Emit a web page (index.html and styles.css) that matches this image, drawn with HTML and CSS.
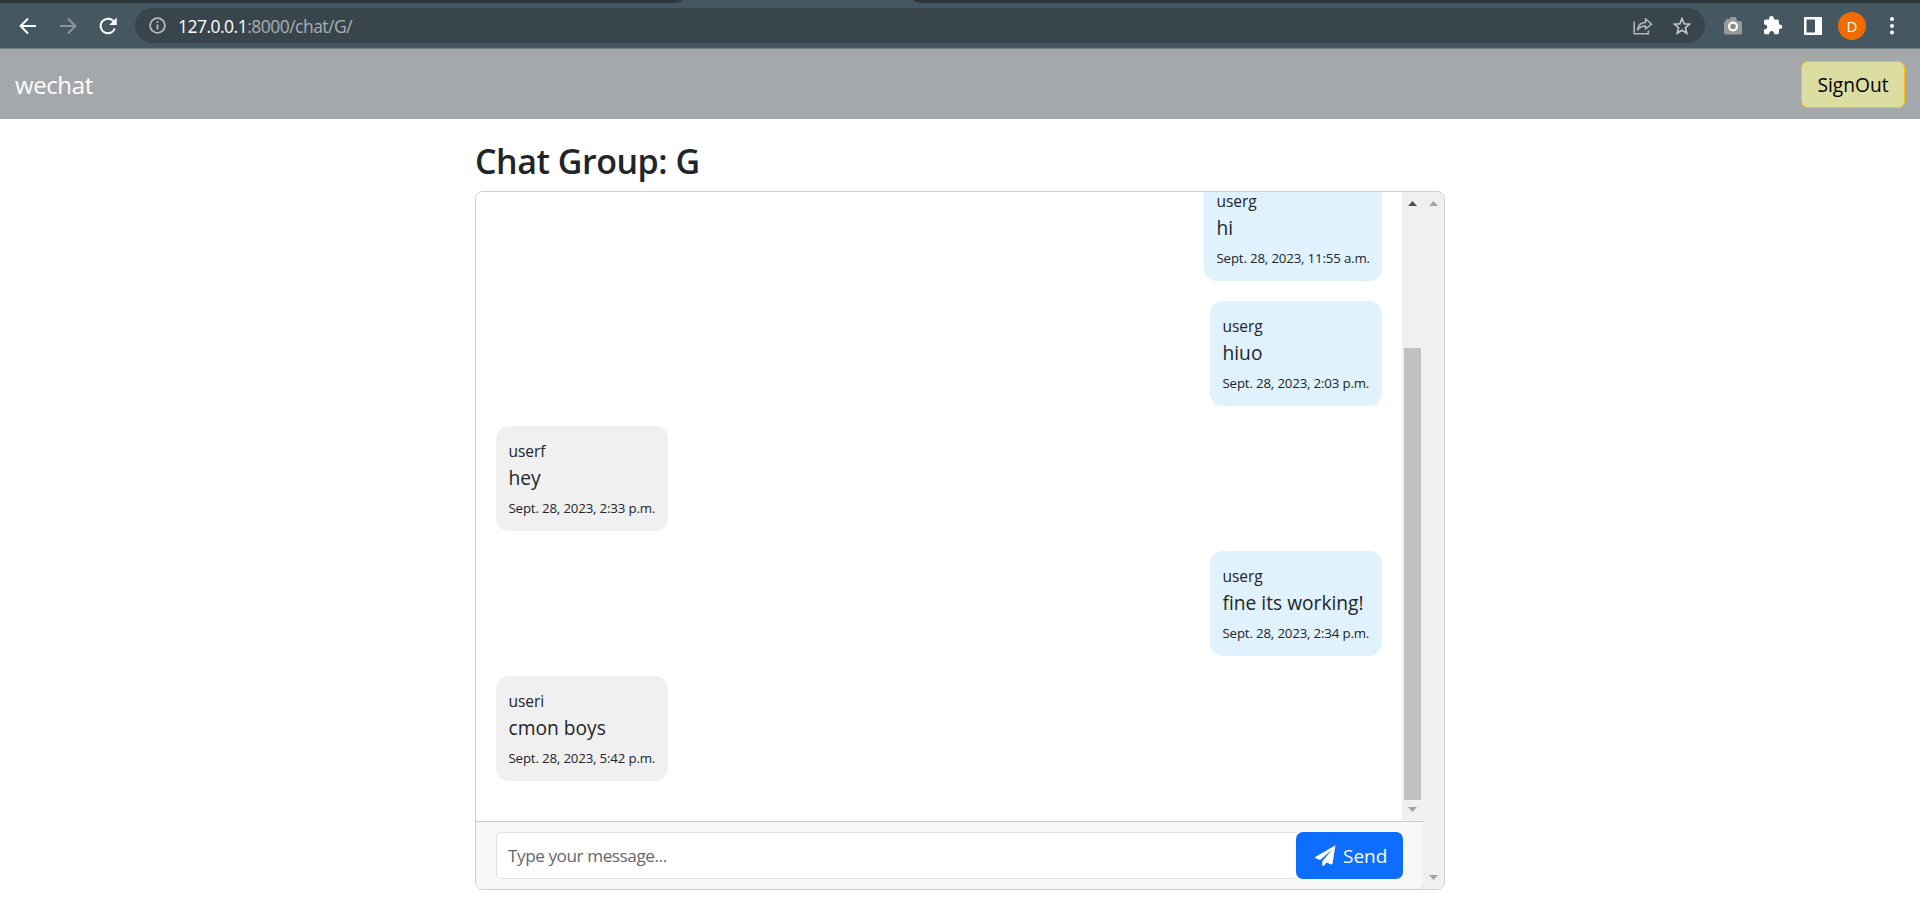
FILE: index.html
```html
<!DOCTYPE html>
<html lang="en">
<head>
<meta charset="utf-8">
<title>wechat</title>
<link rel="stylesheet" href="styles.css">
</head>
<body>
<header class="browser">
  <div class="tabs"><span class="tab-edge left"></span><span class="tab-gap"></span><span class="tab-edge right"></span></div>
  <div class="toolbar">
    <div class="nav-icons">
      <svg width="18" height="18" viewBox="0 0 18 18" fill="none" stroke="#fff" stroke-width="2"><path d="M17 9H2M9 1.5L1.6 9L9 16.500"/></svg>
      <svg width="18" height="18" viewBox="0 0 18 18" fill="none" stroke="#8b979e" stroke-width="2"><path d="M1 9H16M9 1.500L16.400 9L9 16.500"/></svg>
      <svg width="18" height="18" viewBox="0 0 18 18"><path d="M15.800 11.500A7.300 7.300 0 1 1 14.300 4" fill="none" stroke="#fff" stroke-width="2.100"/><path d="M17.700 .6V8H10.300Z" fill="#fff"/></svg>
    </div>
    <div class="omnibox">
      <svg width="17" height="17" viewBox="0 0 17 17"><circle cx="8.500" cy="8.500" r="7.400" fill="none" stroke="#b4babd" stroke-width="1.800"/><path d="M7.600 7.500H9.400V12.500H7.600ZM7.600 4.200H9.400V6H7.600Z" fill="#b4babd"/></svg>
      <span class="url"><b>127.0.0.1</b>:8000/chat/G/</span>
      <svg class="share" width="20" height="18" viewBox="0 0 20 18" fill="none" stroke="#b4babd" stroke-width="1.500"><path d="M1.200 4.500V16.800H15.300V13.500"/><path d="M4.500 13C5 8.500 7.500 5.500 12.500 5.500V1.800L18.600 7.200L12.500 12V9C9 9 6.500 10 4.500 13Z" stroke-linejoin="round"/></svg>
      <svg class="star" width="18" height="18" viewBox="0 0 18 18"><path d="M9 1.500L11.100 6.700L16.700 7.100L12.400 10.700L13.800 16.200L9 13.200L4.200 16.200L5.600 10.700L1.300 7.100L6.900 6.700Z" fill="none" stroke="#c5cacd" stroke-width="1.600"/></svg>
    </div>
    <div class="extensions">
      <svg width="20" height="18" viewBox="0 0 20 18"><path d="M3 2H6V4H3ZM7 0H13L14 4H17C18.500 4 19 5 19 6V15.500C19 17 18 17.500 17 17.500H3C1.500 17.500 1 16.500 1 15.500V6C1 4.500 2 4 3 4H6Z" fill="#9a9a9a"/><circle cx="10" cy="9.500" r="3.900" fill="#8a8a8a" stroke="#fff" stroke-width="2.200"/></svg>
      <svg width="20" height="20" viewBox="0 0 20 20"><path d="M1 5.500C1 4.200 1.800 3.500 3 3.500H6.200C5.800 1.500 6.800 0 8.500 0S11.200 1.500 10.800 3.500H14C15.200 3.500 16 4.200 16 5.500V8.600C18 8.200 19.200 9.200 19.200 10.800S18 13.300 16 12.900V16.500C16 17.500 15.200 18.300 14 18.300H11.200C11.500 16 10.300 14.900 8.700 14.900S6 16 6.200 18.300H3C1.800 18.300 1 17.500 1 16.500V13.300C3.200 13.500 4.200 12.300 4.200 10.900S3.200 8.300 1 8.600Z" fill="#fff"/></svg>
      <svg width="18" height="18" viewBox="0 0 18 18"><path fill-rule="evenodd" d="M0 0H18V18H0ZM2.500 2.500V15.500H11V2.500Z" fill="#fff"/></svg>
      <span class="avatar">D</span>
      <svg width="4" height="18" viewBox="0 0 4 18" fill="#fff"><circle cx="2" cy="2" r="2"/><circle cx="2" cy="9" r="2"/><circle cx="2" cy="15.500" r="2"/></svg>
    </div>
  </div>
</header>
<nav class="navbar">
  <a class="brand"><span>wechat</span></a>
  <button class="signout"><span>SignOut</span></button>
</nav>
<main class="container">
  <h2 class="title"><span>Chat Group: G</span></h2>
  <section class="chat">
    <div class="chat-main">
      <div class="scroll-row">
        <div class="messages">
          <article class="msg mine first"><p class="name">userg</p><p class="text">hi</p><p class="date">Sept. 28, 2023, 11:55 a.m.</p></article>
          <article class="msg mine"><p class="name">userg</p><p class="text">hiuo</p><p class="date">Sept. 28, 2023, 2:03 p.m.</p></article>
          <article class="msg"><p class="name">userf</p><p class="text">hey</p><p class="date">Sept. 28, 2023, 2:33 p.m.</p></article>
          <article class="msg mine"><p class="name">userg</p><p class="text">fine its working!</p><p class="date">Sept. 28, 2023, 2:34 p.m.</p></article>
          <article class="msg"><p class="name">useri</p><p class="text">cmon boys</p><p class="date">Sept. 28, 2023, 5:42 p.m.</p></article>
        </div>
        <div class="scrollbar">
          <svg width="9" height="5" viewBox="0 0 9 5" fill="#505050"><path d="M0 5L4.500 0L9 5Z"/></svg>
          <div class="thumb"></div>
          <svg width="9" height="5" viewBox="0 0 9 5" fill="#a3a3a3"><path d="M0 0L4.500 5L9 0Z"/></svg>
        </div>
      </div>
      <div class="composer">
        <div class="field"><span>Type your message...</span></div>
        <button class="send">
          <svg width="21" height="21" viewBox="0 0 21 21" fill="#fff"><path d="M20.500 .3L.6 11.700C-.1 12.100 0 12.900 .7 13.200L5.200 15L17.200 4.500L7.300 16.200V19.900C7.300 20.900 8.500 21.200 9.100 20.500L11.500 17.600L16.200 19.500C16.800 19.800 17.400 19.400 17.500 18.800Z"/></svg>
          <span>Send</span>
        </button>
      </div>
    </div>
    <div class="scrollbar outer">
      <svg width="9" height="5" viewBox="0 0 9 5" fill="#a3a3a3"><path d="M0 5L4.500 0L9 5Z"/></svg>
      <svg width="9" height="5" viewBox="0 0 9 5" fill="#a3a3a3"><path d="M0 0L4.500 5L9 0Z"/></svg>
    </div>
  </section>
</main>
</body>
</html>
```
FILE: styles.css
```css
* { box-sizing: border-box; }
body { margin: 0; height: 924px; overflow: hidden; background: #fff; color: #212529; font-family: "Open Sans", "Noto Sans", sans-serif; font-weight: 400; }
p, h2 { margin: 0; }
button { font-family: inherit; font-weight: inherit; margin: 0; padding: 0; }
svg { display: block; flex: none; }

.browser { height: 49px; background: #455760; border-bottom: 1px solid #6c7c86; }
.tabs { display: flex; height: 3px; }
.tab-edge { background: #2b373b; }
.tab-edge.left { width: 682px; border-bottom-right-radius: 8px 3px; }
.tab-gap { width: 232px; }
.tab-edge.right { flex: 1; border-bottom-left-radius: 8px 3px; }
.toolbar { display: flex; align-items: center; height: 45px; }
.nav-icons { display: flex; gap: 22px; width: 135px; padding-left: 19px; }
.omnibox { display: flex; align-items: center; width: 1570px; height: 35px; padding: 0 14px; border-radius: 18px; background: #39454c; }
.url { margin-left: 12px; font-size: 17.500px; line-height: 24px; letter-spacing: -0.520px; color: #a9b0b4; white-space: nowrap; }
.url b { font-weight: 400; color: #fff; }
.share { margin-left: auto; }
.star { margin-left: 20px; }
.extensions { display: flex; align-items: center; padding-left: 18px; }
.extensions svg:nth-child(2) { margin: 0 21px 0 20px; }
.avatar { width: 28px; height: 28px; margin: 0 24px 0 16px; border-radius: 50%; background: #ef6c00; color: #fff; font-size: 15px; line-height: 28px; text-align: center; }

.navbar { display: flex; align-items: center; justify-content: space-between; height: 70px; padding: 0 15px; background: #a5a8ab; }
.brand { padding-top: 1px; color: #fff; font-size: 24px; line-height: 38px; letter-spacing: -0.4px; }
.signout { width: 104px; height: 47px; padding-top: 1px; border: 1px solid #ffc107; border-radius: 7px; background: #dcdda0; color: #000; font-size: 19.200px; line-height: 44px; }

.container { width: 970px; margin: 0 auto; padding-top: 24px; }
.title { height: 48px; font-size: 34px; line-height: 36px; font-weight: 600; letter-spacing: -0.480px; white-space: nowrap; }
.chat { display: flex; height: 699px; border: 1px solid #cfd0d1; border-radius: 8px; overflow: hidden; }
.chat-main { display: flex; flex-direction: column; width: 947px; background: #f0f0f0; }
.scroll-row { display: flex; height: 629px; }
.messages { display: flex; flex-direction: column; justify-content: flex-end; align-items: flex-start; gap: 20px; flex: 1; padding: 0 20px 40px; overflow: hidden; background: #fff; }
.msg { flex: none; height: 105px; padding: 12px 12.500px; border-radius: 13px; background: #f0f0f0; white-space: nowrap; width: 172px; }
.msg.mine { align-self: flex-end; background: #e1f2ff; }
.msg.first { height: 89px; padding-top: 0; width: 178px; border-radius: 0 0 13px 13px; }
.msg.first .name { height: 22px; line-height: 19px; }
.name { font-size: 15.500px; line-height: 26px; letter-spacing: -0.050px; }
.text { font-size: 19.200px; line-height: 28px; }
.date { margin-top: 5px; font-size: 13.300px; line-height: 22px; letter-spacing: -0.180px; }
.scrollbar { display: flex; flex-direction: column; justify-content: space-between; align-items: center; width: 21px; padding: 9px 0; background: #f0f0f0; }
.thumb { width: 17px; height: 452px; margin: 142px 0 7px; background: #c1c1c1; }
.composer { display: flex; align-items: center; height: 68px; padding: 0 20px; border-top: 1px solid #c8cacb; border-bottom-right-radius: 8px; background: #f8f8f8; }
.field { flex: 1; height: 47px; padding-left: 11px; border: 1px solid #dee2e6; border-right: 0; border-radius: 5px 0 0 5px; background: #fff; color: #62676c; font-size: 17.200px; line-height: 46px; letter-spacing: -0.450px; }
.send { display: flex; align-items: center; gap: 7px; width: 107px; height: 47px; padding-left: 19px; margin-left: -1px; border: 0; border-radius: 7px; background: #0d6efd; color: #fff; font-size: 19px; line-height: 47px; }
.send span { padding-top: 2px; }
```
